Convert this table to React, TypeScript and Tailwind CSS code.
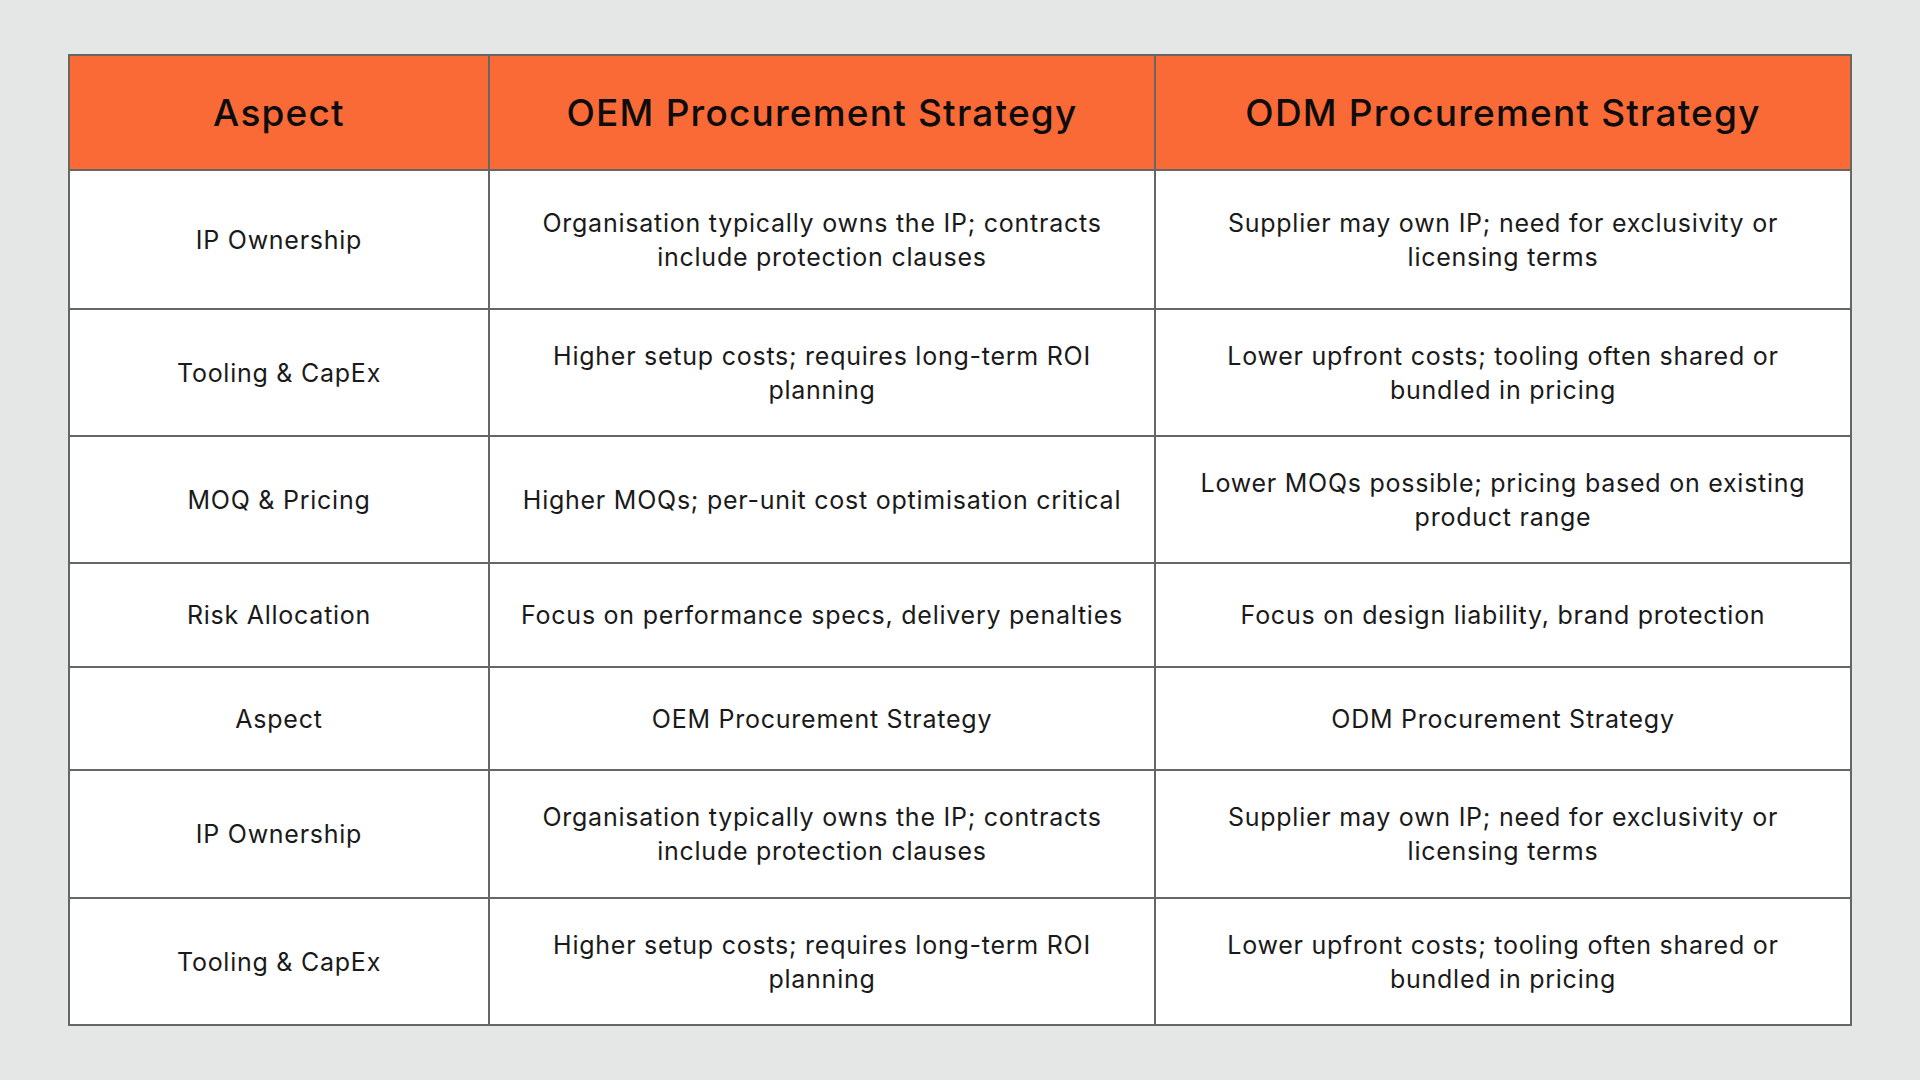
const rows: { h: string; cells: string[][] }[] = [
  {
    h: 'h-[137px]',
    cells: [
      ['IP Ownership'],
      ['Organisation typically owns the IP; contracts', 'include protection clauses'],
      ['Supplier may own IP; need for exclusivity or', 'licensing terms'],
    ],
  },
  {
    h: 'h-[125px]',
    cells: [
      ['Tooling & CapEx'],
      ['Higher setup costs; requires long-term ROI', 'planning'],
      ['Lower upfront costs; tooling often shared or', 'bundled in pricing'],
    ],
  },
  {
    h: 'h-[125px]',
    cells: [
      ['MOQ & Pricing'],
      ['Higher MOQs; per-unit cost optimisation critical'],
      ['Lower MOQs possible; pricing based on existing', 'product range'],
    ],
  },
  {
    h: 'h-[102px]',
    cells: [
      ['Risk Allocation'],
      ['Focus on performance specs, delivery penalties'],
      ['Focus on design liability, brand protection'],
    ],
  },
  {
    h: 'h-[101px]',
    cells: [['Aspect'], ['OEM Procurement Strategy'], ['ODM Procurement Strategy']],
  },
  {
    h: 'h-[126px]',
    cells: [
      ['IP Ownership'],
      ['Organisation typically owns the IP; contracts', 'include protection clauses'],
      ['Supplier may own IP; need for exclusivity or', 'licensing terms'],
    ],
  },
  {
    h: 'h-[125px]',
    cells: [
      ['Tooling & CapEx'],
      ['Higher setup costs; requires long-term ROI', 'planning'],
      ['Lower upfront costs; tooling often shared or', 'bundled in pricing'],
    ],
  },
];

const headers = ['Aspect', 'OEM Procurement Strategy', 'ODM Procurement Strategy'];

export default function App() {
  return (
    <div
      className="min-h-screen bg-[#e5e7e6] px-[68px] pt-[54px]"
      style={{ fontFamily: 'Inter, "Open Sans", sans-serif' }}
    >
      <div className="grid w-[1784px] grid-cols-[418px_664px_694px] gap-[2px] bg-[#666666] p-[2px]">
        {headers.map((h) => (
          <div
            key={h}
            className="flex h-[113px] items-center justify-center bg-[#f96a37] text-[37px] font-medium tracking-[1.2px] text-[#0d0d0d]"
          >
            {h}
          </div>
        ))}

        {rows.map((row, i) =>
          row.cells.map((lines, j) => (
            <div
              key={`${i}-${j}`}
              className={`${row.h} flex flex-col items-center justify-center bg-white text-center text-[25px] leading-[34px] tracking-[0.75px] text-[#1a1a1a]`}
            >
              {lines.map((l) => (
                <span key={l} className="whitespace-nowrap">
                  {l}
                </span>
              ))}
            </div>
          ))
        )}
      </div>
    </div>
  );
}
